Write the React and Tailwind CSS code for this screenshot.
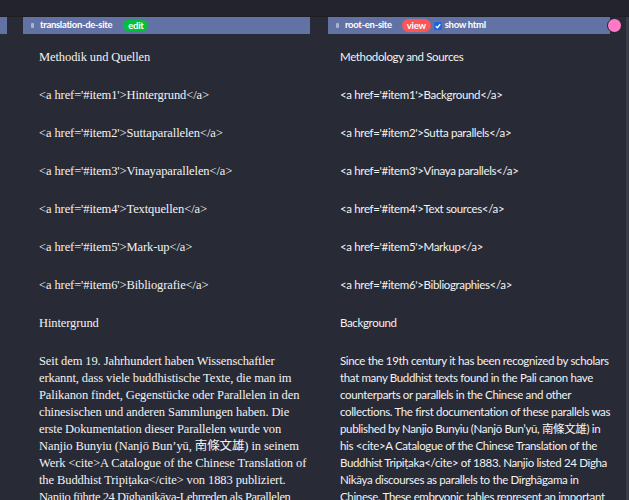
import React from "react";

const sans = { fontFamily: "Lato, 'Noto Sans CJK JP', sans-serif" };

const deSegments = [
  "Methodik und Quellen",
  "<a href='#item1'>Hintergrund</a>",
  "<a href='#item2'>Suttaparallelen</a>",
  "<a href='#item3'>Vinayaparallelen</a>",
  "<a href='#item4'>Textquellen</a>",
  "<a href='#item5'>Mark-up</a>",
  "<a href='#item6'>Bibliografie</a>",
  "Hintergrund",
];

// wrapped the way the editor shows it
const deParagraph = [
  "Seit dem 19. Jahrhundert haben Wissenschaftler",
  "erkannt, dass viele buddhistische Texte, die man im",
  "Palikanon findet, Gegenstücke oder Parallelen in den",
  "chinesischen und anderen Sammlungen haben. Die",
  "erste Dokumentation dieser Parallelen wurde von",
  "Nanjio Bunyiu (Nanjō Bun’yū, 南條文雄) in seinem",
  "Werk <cite>A Catalogue of the Chinese Translation of",
  "the Buddhist Tripiṭaka</cite> von 1883 publiziert.",
  "Nanjio führte 24 Dīghanikāya-Lehrreden als Parallelen",
  "zum Dīrghāgama im Chinesischen auf.",
];

const enSegments = [
  "Methodology and Sources",
  "<a href='#item1'>Background</a>",
  "<a href='#item2'>Sutta parallels</a>",
  "<a href='#item3'>Vinaya parallels</a>",
  "<a href='#item4'>Text sources</a>",
  "<a href='#item5'>Markup</a>",
  "<a href='#item6'>Bibliographies</a>",
  "Background",
  "Since the 19th century it has been recognized by scholars that many Buddhist texts found in the Pali canon have counterparts or parallels in the Chinese and other collections. The first documentation of these parallels was published by Nanjio Bunyiu (Nanjō Bun’yū, 南條文雄) in his <cite>A Catalogue of the Chinese Translation of the Buddhist Tripiṭaka</cite> of 1883. Nanjio listed 24 Dīgha Nikāya discourses as parallels to the Dīrghāgama in Chinese. These embryonic tables represent an important first step.",
];

const Grip = () => (
  <span className="inline-block w-[3px] h-[5px] bg-[#aab3cf] rounded-[1px] mr-[6px]"></span>
);

const App = () => {
  return (
    <div className="w-full h-[500px] overflow-hidden bg-[#282a36] flex flex-col">
      <div className="h-[17px] shrink-0 bg-[#22232d] border-b border-[#1d1e26]"></div>
      <div className="flex flex-1 min-h-0">
        {/* previous column, mostly off screen */}
        <div className="w-[7px] shrink-0">
          <div className="h-[17px] bg-[#6272a4]"></div>
        </div>

        {/* translation column */}
        <div className="w-[287px] shrink-0 ml-[16px]">
          <div
            className="h-[17px] bg-[#6272a4] flex items-center pl-[8px] text-[9.5px] font-bold tracking-[-0.3px] text-white"
            style={sans}
          >
            <Grip />
            <span>translation-de-site</span>
            <span className="ml-[11px] bg-[#00c23a] rounded-full px-[5px] h-[11px] leading-[11px]">
              edit
            </span>
          </div>
          <div
            className="pl-[16px] pt-[15px] text-[12.5px] tracking-[-0.1px] leading-[17px] text-[#f2f2f2]"
            style={{ fontFamily: "'Liberation Serif', 'Noto Sans CJK JP', serif" }}
          >
            {deSegments.map((s, i) => (
              <p key={i} className="mb-[21px]">
                {s}
              </p>
            ))}
            <p className="mb-[21px] whitespace-nowrap">
              {deParagraph.map((line, i) => (
                <span
                  key={i}
                  className={i === 8 ? "block tracking-[-0.45px]" : "block"}
                >
                  {line}
                </span>
              ))}
            </p>
          </div>
        </div>

        {/* root column */}
        <div className="relative w-[282px] shrink-0 ml-[18px]">
          <div
            className="h-[17px] bg-[#6272a4] flex items-center pl-[8px] text-[9.5px] font-bold tracking-[-0.3px] text-white"
            style={sans}
          >
            <Grip />
            <span>root-en-site</span>
            <span className="ml-[10px] bg-[#ff5555] rounded-full px-[5px] h-[13px] leading-[13px]">
              view
            </span>
            <span className="ml-[3px] flex items-center justify-center">
              <svg viewBox="0 0 10 10" className="w-[8px] h-[8px]">
                <rect width="10" height="10" rx="2" fill="#1a66e0" />
                <path d="M2.2 5.2 L4.2 7.2 L7.8 2.8" stroke="white" strokeWidth="1.6" fill="none" />
              </svg>
            </span>
            <span className="ml-[3px]">show html</span>
          </div>
          <span className="absolute right-[-12px] top-[1px] w-[15px] h-[15px] rounded-full bg-[#ff79c6] border-[1.5px] border-[#1d1e26]"></span>
          <div
            className="pl-[12px] pt-[14px] text-[11.5px] tracking-[-0.35px] leading-[17px] text-[#f2f2f2] w-[285px]"
            style={sans}
          >
            {enSegments.map((s, i) => (
              <p key={i} className="mb-[21px]">
                {s}
              </p>
            ))}
          </div>
        </div>

        <div className="flex-1"></div>
        <div className="w-[3px] shrink-0 bg-[#3a3c48]"></div>
      </div>
    </div>
  );
};

export default App;
